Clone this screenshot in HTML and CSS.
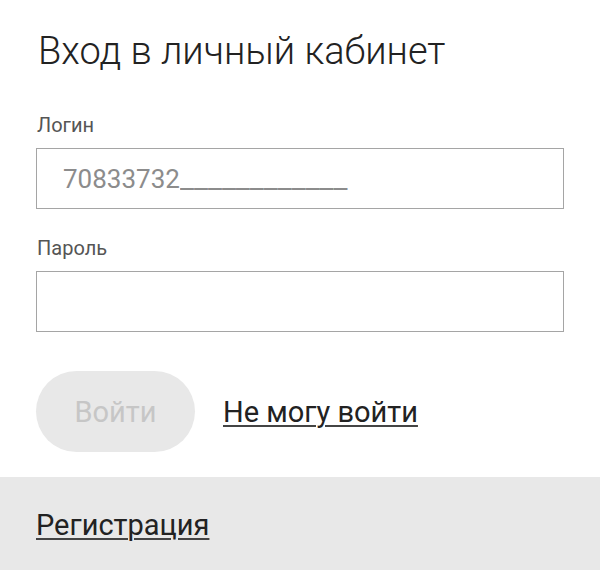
FILE: index.html
```html
<!DOCTYPE html>
<html lang="ru">
<head>
<meta charset="utf-8">
<title>Вход в личный кабинет</title>
<link rel="stylesheet" href="styles.css">
</head>
<body>
<div class="page">
  <main class="content">
    <h1 class="title">Вход в личный кабинет</h1>
    <div class="field">
      <label class="label" for="login">Логин</label>
      <div class="input"><span class="input-text">70833732<span class="mask">____________</span></span></div>
    </div>
    <div class="field field-second">
      <label class="label" for="pass">Пароль</label>
      <div class="input"></div>
    </div>
    <div class="actions">
      <button class="btn" type="button">Войти</button>
      <a class="link" href="#">Не могу войти</a>
    </div>
  </main>
  <footer class="footer">
    <a class="link" href="#">Регистрация</a>
  </footer>
</div>
</body>
</html>
```

FILE: styles.css
```css
html, body {
  margin: 0;
  padding: 0;
  background: #ffffff;
}
body {
  font-family: Roboto, "Liberation Sans", sans-serif;
  color: #222222;
}
.page {
  width: 600px;
  height: 570px;
  display: flex;
  flex-direction: column;
  overflow: hidden;
}
.content {
  padding: 28px 36px 0 36px;
  flex: 0 0 auto;
}
.title {
  margin: 0 0 0 2px;
  font-size: 38px;
  line-height: 46px;
  font-weight: 300;
  color: #222222;
}
.field {
  display: flex;
  flex-direction: column;
  margin-top: 40px;
}
.field-second {
  margin-top: 28px;
}
.label {
  font-size: 20px;
  line-height: 22px;
  color: #555555;
  margin: 0 0 12px 1px;
}
.input {
  box-sizing: border-box;
  height: 61px;
  border: 1px solid #a5a5a5;
  display: flex;
  align-items: center;
  padding-left: 26px;
}
.input-text {
  font-size: 26px;
  color: #8c8c8c;
  font-weight: 400;
  white-space: nowrap;
}
.mask {
  display: inline-block;
  transform: scaleX(1.19);
  transform-origin: left center;
}
.actions {
  display: flex;
  align-items: center;
  gap: 28px;
  margin-top: 39px;
}
.btn {
  width: 159px;
  height: 81px;
  border: none;
  border-radius: 41px;
  background: #e8e8e8;
  color: #c6c6c6;
  font-family: inherit;
  font-size: 29px;
  padding: 0;
}
.link {
  font-size: 29px;
  color: #222222;
  text-decoration: underline;
  text-decoration-thickness: 2px;
  text-underline-offset: 3px;
  text-decoration-color: #444444;
}
.footer {
  margin-top: 25px;
  flex: 1 1 auto;
  background: #e8e8e8;
  padding: 31px 36px 0 36px;
}
```
